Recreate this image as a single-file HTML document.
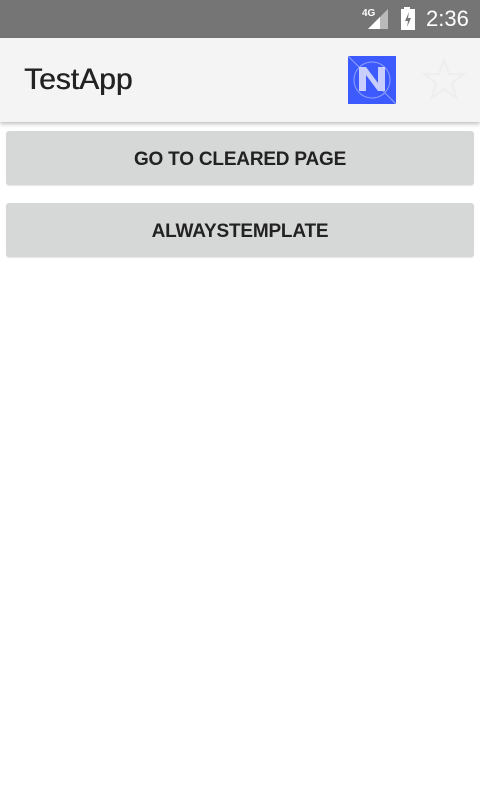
<!DOCTYPE html>
<html><head><style>
body{margin:0;width:480px;height:800px;background:#fff;font-family:"Liberation Sans",sans-serif;position:relative;overflow:hidden}
.sb{position:absolute;top:0;left:0;width:480px;height:38px;background:#757575;color:#fff}
.ab{position:absolute;top:38px;left:0;width:480px;height:84px;background:#f4f4f4;box-shadow:0 2px 4px rgba(0,0,0,.25)}
.title{position:absolute;left:24px;top:25px;font-size:30px;color:#222;text-shadow:0.5px 0 0 #222}
.btn{position:absolute;left:6px;width:468px;height:54px;background:#d6d7d7;border-radius:3px;text-align:center;line-height:57px;font-size:19px;color:#222;font-weight:bold;letter-spacing:-0.2px;box-shadow:0 1px 1px rgba(0,0,0,.1)}
</style></head><body>
<div class="sb">
<div style="position:absolute;left:362px;top:8px;font-size:10px;font-weight:bold">4G</div>
<svg style="position:absolute;left:366px;top:9px" width="24" height="20"><polygon points="22,0 22,20 2,20" fill="#fff" opacity=".5"/><polygon points="14,8 14,20 2,20" fill="#fff"/></svg>
<svg style="position:absolute;left:400px;top:7px" width="16" height="24"><rect x="4" y="0" width="6" height="3" fill="#fff"/><rect x="1" y="2" width="14" height="21" fill="#fff"/><path d="M9 5 L5 14 H8 L7 20 L11 11 H8 Z" fill="#757575"/></svg>
<div style="position:absolute;left:426px;top:6px;font-size:22px">2:36</div>
</div>
<div class="ab"><div class="title">TestApp</div>
<svg style="position:absolute;left:348px;top:18px" width="48" height="48"><rect width="48" height="48" fill="#3d5afe"/><circle cx="24" cy="24" r="18" fill="none" stroke="#8ea0ff" stroke-width="1"/><line x1="0" y1="0" x2="48" y2="48" stroke="#8ea0ff"/><path d="M11 35 V11 H18 L30 27 V11 H37 V35 H30 L18 19 V35 Z" fill="#c8cfff"/></svg>
<svg style="position:absolute;left:420px;top:18px" width="48" height="48"><polygon points="24,4 29,18 44,18 32,27 36,42 24,33 12,42 16,27 4,18 19,18" fill="none" stroke="#eeeeee" stroke-width="2"/></svg>
</div>
<div class="btn" style="top:131px">GO TO CLEARED PAGE</div>
<div class="btn" style="top:203px">ALWAYSTEMPLATE</div>
</body></html>
